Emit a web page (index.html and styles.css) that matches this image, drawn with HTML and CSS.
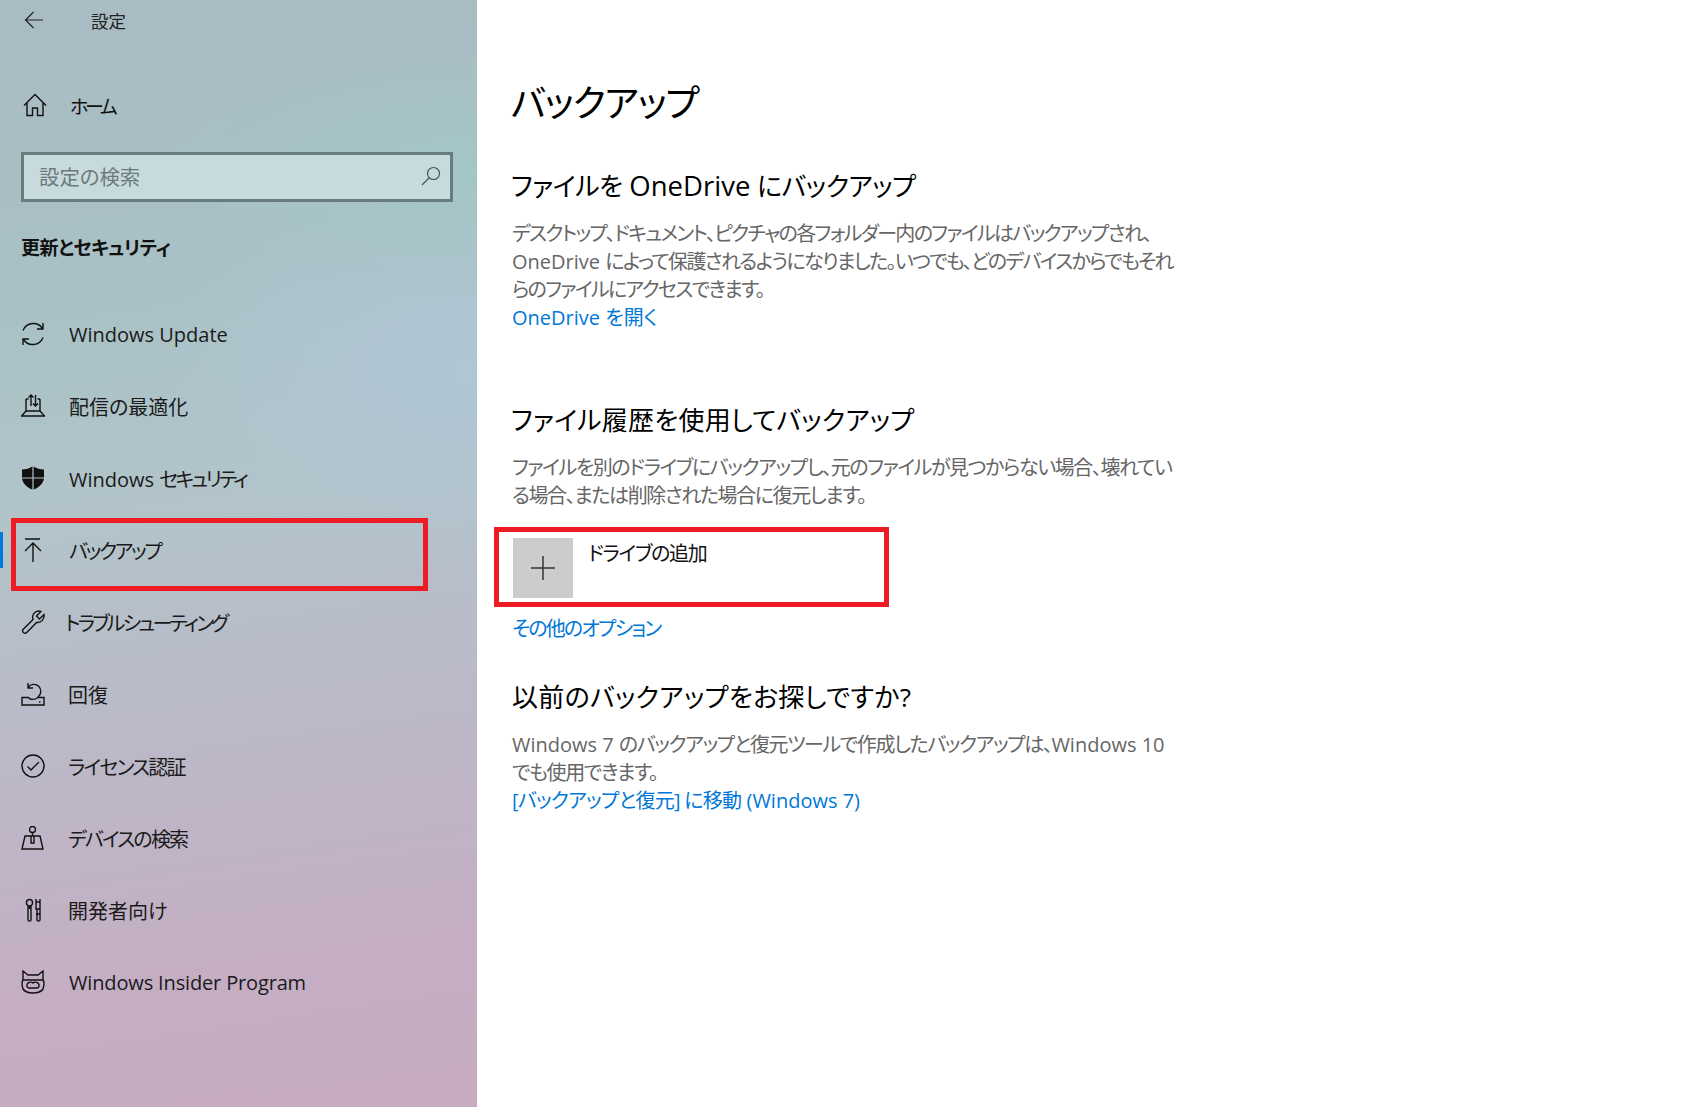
FILE: index.html
```html
<!DOCTYPE html>
<html lang="ja">
<head>
<meta charset="utf-8">
<title>設定</title>
<link rel="stylesheet" href="styles.css">
</head>
<body>
<div class="app">
  <aside class="sidebar">
    <div class="titlebar">
      <svg class="back" viewBox="0 0 20 20"><path d="M19 10H1.500M9.500 2L1.500 10l8 8"/></svg>
      <span class="apptitle">設定</span>
    </div>
    <div class="home">
      <svg class="icon" viewBox="0 0 24 24"><path d="M1 12.500L12 1.500l11 11M4 10v12.500h5.500V15h5v7.500H20V10"/></svg>
      <span class="home-label">ホーム</span>
    </div>
    <div class="search">
      <span class="search-text">設定の検索</span>
      <svg class="search-icon" viewBox="0 0 20 20"><circle cx="12.500" cy="7.500" r="6"/><path d="M8 12L1 19"/></svg>
    </div>
    <div class="section">更新とセキュリティ</div>
    <nav class="nav">
      <a class="item">
        <svg class="icon" viewBox="0 0 24 24"><path d="M2 8.500A11 11 0 0 1 21.500 6.500M22 15.500A11 11 0 0 1 2.500 17.500M22 1v6h-6M2 23v-6h6"/></svg>
        <span class="label">Windows Update</span>
      </a>
      <a class="item">
        <svg class="icon" viewBox="0 0 24 24"><path d="M5 5v12M19 5v12M5 5h2.500M19 5h-2.500M5 17h14M5 17l-4.500 5h23L19 17M10 12V1M7.500 3.500L10 1l2.500 2.500M14.500 1v11M12 9.500l2.500 2.500L17 9.500"/></svg>
        <span class="label">配信の最適化</span>
      </a>
      <a class="item">
        <svg class="icon solid" viewBox="0 0 24 24"><path d="M1 3.500c4 0 7.500-1 10.400-3v10.900H1zM12.600.5c3 2 6.500 3 10.400 3v7.900H12.600zM1 12.600h10.400v11C6 21.500 2 18 1 12.600zM12.600 12.600H23c-1 5.400-5 8.900-10.400 11z"/></svg>
        <span class="label">Windows <span class="track-xl">セキュリティ</span></span>
      </a>
      <a class="item active">
        <svg class="icon" viewBox="0 0 24 24"><path d="M4 1h15M12 24V6M4 13l8-8 8 8"/></svg>
        <span class="label track-l">バックアップ</span>
        <span class="redbox side"></span>
      </a>
      <a class="item">
        <svg class="icon" viewBox="0 0 24 24"><path d="M2 19.500L12 9.500C10.500 5 13.500 1 18 1c1 0 1.500.2 2 .5L15.500 6l3 3L23 4.500c.5 4.500-2.500 8.500-7.500 8L6 22.300c-1 1-2.500 1-3.500.2-1-.8-1.300-2-.5-3z"/></svg>
        <span class="label tight track-xl">トラブルシューティング</span>
      </a>
      <a class="item">
        <svg class="icon" viewBox="0 0 24 24"><path d="M1 15.500h6.500c1 2.500 7.500 2.500 9 0H23V23H1zM18 20h1.500M7 5.500A7 7 0 1 1 17 15M7 1v5h5"/></svg>
        <span class="label near">回復</span>
      </a>
      <a class="item">
        <svg class="icon" viewBox="0 0 24 24"><circle cx="12" cy="12" r="11"/><path d="M6.500 12.500l3.500 3.500 8-8"/></svg>
        <span class="label near track-m">ライセンス認証</span>
      </a>
      <a class="item">
        <svg class="icon" viewBox="0 0 24 24"><circle cx="11.500" cy="3.500" r="3"/><path d="M11.500 6.500V10M1 23L4 10h15l3 13zM10 10h3v7h-3z"/></svg>
        <span class="label near track-m">デバイスの検索</span>
      </a>
      <a class="item">
        <svg class="icon" viewBox="0 0 24 24"><path d="M7 8v14c0 1.500 3 1.500 3 0V8M8.500 8V11M8.500 8a3 3 0 0 1-3-3.500c0-1.500 1-3 3-3s3 1.500 3 3A3 3 0 0 1 8.500 8zM15 1v3h4V1M15 4v7h4V4M16 11v11c0 1.500 3 1.500 3 0V11M15 16h4"/></svg>
        <span class="label near">開発者向け</span>
      </a>
      <a class="item">
        <svg class="icon" viewBox="0 0 24 24"><path d="M2 1l5 4h10l5-4v9c2 3 1 6 0 9-2 3-5 4-10 4S4 22 2 19c-1-3-2-6 0-9zM2 10h20M7 8.500h.1M17 8.500h.1M7 13c2-1 4-1 5 0 1-1 3-1 5 0 2 2 1 5-1 5H8c-2 0-3-3-1-5zM9 15.500h.1M15 15.500h.1"/></svg>
        <span class="label track-latin">Windows Insider Program</span>
      </a>
    </nav>
  </aside>
  <main class="content">
    <h1 class="page-title">バックアップ</h1>
    <h2 class="heading first"><span class="tighter">ファイルを</span> <span class="latin-big">OneDrive</span> <span class="tighter">にバックアップ</span></h2>
    <p class="body"><span class="jp">デスクトップ、ドキュメント、ピクチャの各フォルダー内のファイルはバックアップされ、</span><br>OneDrive <span class="jp">によって保護されるようになりました。いつでも、どのデバイスからでもそれ</span><br><span class="jp">らのファイルにアクセスできます。</span><br><a class="link">OneDrive を開く</a></p>
    <h2 class="heading second">ファイル履歴を使用してバックアップ</h2>
    <p class="body"><span class="jp-b">ファイルを別のドライブにバックアップし、元のファイルが見つからない場合、壊れてい</span><br><span class="jp-b">る場合、または削除された場合に復元します。</span></p>
    <div class="add-drive">
      <span class="tile"><svg class="plus" viewBox="0 0 24 24"><path d="M0 12h24M12 0v24"/></svg></span>
      <span class="add-label">ドライブの追加</span>
      <span class="redbox main-box"></span>
    </div>
    <a class="link more">その他のオプション</a>
    <h2 class="heading third">以前のバックアップをお探しですか?</h2>
    <p class="body">Windows 7 <span class="jp-c">のバックアップと復元ツールで作成したバックアップは、</span>Windows 10<br><span class="jp-c">でも使用できます。</span><br><a class="link"><span class="jp-d">[バックアップと復元] に移動</span> (Windows 7)</a></p>
  </main>
</div>
</body>
</html>
```
FILE: styles.css
```css
* { box-sizing: border-box; }
html, body { margin: 0; height: 100%; }
body {
  font-family: "Open Sans", "Noto Sans CJK JP", sans-serif;
  font-feature-settings: "palt";
  color: #111;
  background: #fff;
  overflow: hidden;
}
.app { display: flex; height: 1107px; }

.sidebar {
  width: 477px;
  flex: none;
  background:
    radial-gradient(340px 130px at 100% 170px, #a4c6c6 0%, rgba(164,198,198,0) 100%),
    radial-gradient(320px 190px at 100% 370px, #b1c6d6 0%, rgba(177,198,214,0) 100%),
    linear-gradient(172deg, #a9bcc3 0%, #a9bec4 14%, #a9c2c6 28%, #b2c4ca 45%, #bcb8c8 66%, #c5aec4 85%, #c7abc0 100%);
}
.titlebar { display: flex; align-items: center; height: 40px; padding-left: 24px; }
.back { width: 20px; height: 20px; fill: none; stroke: #222; stroke-width: 1.2; }
.apptitle { margin-left: 47px; font-size: 17.500px; color: #222; }

.home { display: flex; align-items: center; height: 44px; margin-top: 43px; padding-left: 23px; }
.icon { width: 24px; height: 24px; flex: none; fill: none; stroke: #111; stroke-width: 1.4; }
.icon.solid { fill: #111; stroke: none; }
.home-label { margin-left: 23px; padding-top: 2px; font-size: 19px; letter-spacing: -3.300px; }

.search {
  display: flex; align-items: center; justify-content: space-between;
  width: 432px; height: 50px; margin: 25px 0 0 21px; padding: 0 9px 2px 15px;
  border: 3px solid #687c7d;
  background: #c8dbdc;
}
.search-text { font-size: 20.400px; color: #6b7a7c; }
.search-icon { width: 20px; height: 20px; fill: none; stroke: #45565a; stroke-width: 1.2; }

.section { margin: 28px 0 0 21px; font-size: 19px; font-weight: 700; line-height: 36px; letter-spacing: -.5px; }

.nav { display: flex; flex-direction: column; margin-top: 32px; }
.item { position: relative; display: flex; align-items: center; height: 72px; padding-left: 21px; }
.label { margin-left: 24px; font-size: 20px; color: #1a1a1a; }
.label.near { margin-left: 23px; }
.label.tight { margin-left: 20px; }
.track-m { letter-spacing: -1.800px; }
.track-l { letter-spacing: -2.300px; }
.track-xl { letter-spacing: -2.800px; }
.track-latin { letter-spacing: -.15px; }
.item.active::before {
  content: ""; position: absolute; left: 0; top: 18px; width: 3px; height: 36px; background: #0078d7;
}

.redbox { position: absolute; border: 5px solid #ed1c24; }
.redbox.side { left: 11px; top: 4px; width: 417px; height: 73px; }

.content { flex: 1; padding-left: 34px; }
.page-title { margin: 79px 0 0; font-size: 37px; font-weight: 400; line-height: 48px; letter-spacing: -1.300px; color: #000; }
.heading { margin: 0; font-size: 26px; font-weight: 400; line-height: 36px; letter-spacing: .2px; color: #000; }
.heading.first { margin-top: 41px; letter-spacing: 0; }
.heading.second { margin-top: 70px; }
.heading.third { margin: 36px 0 0 1px; letter-spacing: .3px; }
.tighter { letter-spacing: -.5px; }
.latin-big { font-size: 27.500px; }
.body { margin: 16px 0 0 1px; font-size: 20px; line-height: 28px; color: #666; white-space: nowrap; }
.jp { letter-spacing: -1.650px; }
.jp-b { letter-spacing: -1.400px; }
.jp-c { letter-spacing: -1.400px; }
.jp-d { letter-spacing: -.75px; }
.link { color: #0078d7; }

.add-drive { position: relative; display: flex; align-items: flex-start; margin-top: 28px; padding-left: 2px; }
.tile { display: flex; align-items: center; justify-content: center; width: 60px; height: 60px; background: #ccc; }
.plus { width: 24px; height: 24px; fill: none; stroke: #333; stroke-width: 1.5; }
.add-label { margin-left: 15px; font-size: 20px; line-height: 32px; letter-spacing: -1.300px; color: #111; }
.redbox.main-box { left: -17px; top: -11px; width: 395px; height: 80px; }
.more { display: block; margin: 17px 0 0 1px; font-size: 20px; line-height: 28px; letter-spacing: -1.800px; }
```
